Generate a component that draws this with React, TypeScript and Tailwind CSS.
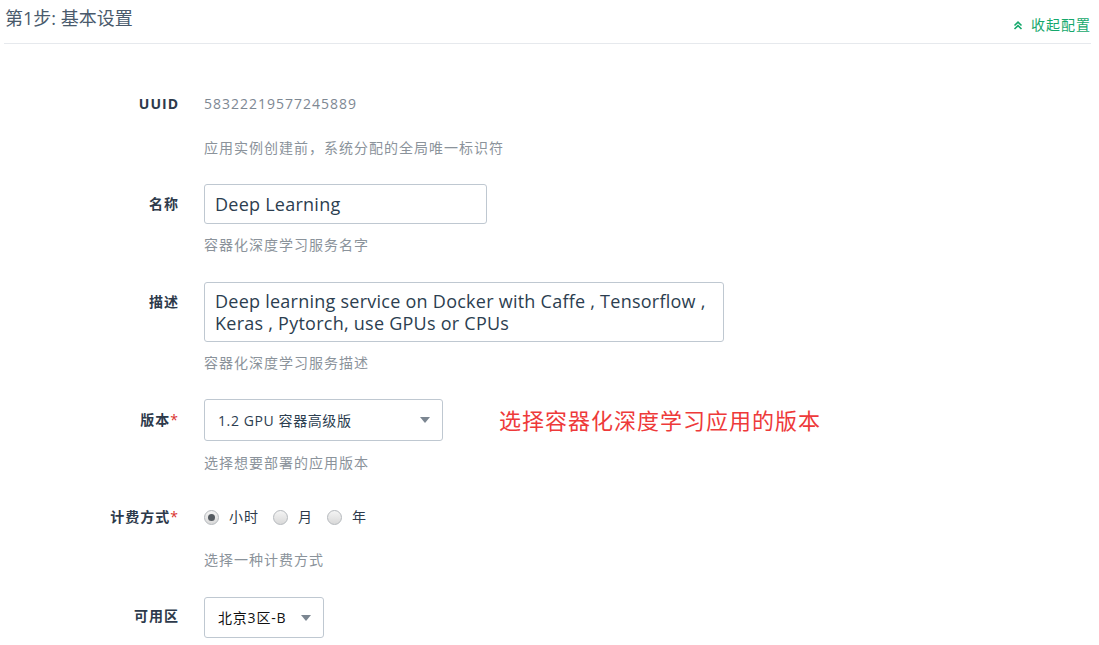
import { useState } from 'react';

const font = { fontFamily: '"Open Sans", "Noto Sans CJK SC", sans-serif' };

const Caret = () => (
    <svg width="10" height="6" viewBox="0 0 10 6" className="shrink-0">
        <path d="M0 0h10L5 6z" fill="#7b8691" />
    </svg>
);

const Help = ({ children, className = '' }: { children: React.ReactNode; className?: string }) => (
    <p className={`text-[14px] leading-5 tracking-[1px] text-[#8b939b] ${className}`}>{children}</p>
);

const Label = ({ text, required, pt }: { text: string; required?: boolean; pt: string }) => (
    <div className={`w-[179px] shrink-0 text-right text-[14px] leading-5 font-bold tracking-[1px] text-[#2d3a4b] ${pt}`}>
        {text}
        {required && <span className="text-[#d9302c] font-normal">*</span>}
    </div>
);

const Radio = ({ checked, label, onClick }: { checked: boolean; label: string; onClick: () => void }) => (
    <button type="button" onClick={onClick} className="flex items-center gap-[10px]">
        <span className="w-[15px] h-[15px] rounded-full border border-[#b5b9bd] bg-gradient-to-b from-[#f4f4f4] to-[#d9d9d9] flex items-center justify-center">
            {checked && <span className="w-[7px] h-[7px] rounded-full bg-[#555b61]" />}
        </span>
        <span className="text-[14px] leading-5 tracking-[1px] text-[#2d3a4b]">{label}</span>
    </button>
);

export default function App() {
    const [billing, setBilling] = useState('hour');

    return (
        <div className="min-h-screen bg-white" style={font}>
            {/* Header */}
            <div className="ml-1 mr-2 h-11 border-b border-[#e6e9ed] flex justify-between">
                <h1 className="pl-[1px] pt-[6px] text-[18px] leading-6 text-[#4a5a6c]">第1步: 基本设置</h1>
                <button className="flex items-center gap-2 h-fit mt-[15px] text-[14px] leading-5 tracking-[1px] text-[#15a86c]">
                    <svg width="10" height="9" viewBox="0 0 10 9" fill="none" stroke="#15a86c" strokeWidth="1.6">
                        <path d="M1.5 4.5L5 1.2l3.5 3.3M1.5 8L5 4.7 8.5 8" />
                    </svg>
                    收起配置
                </button>
            </div>

            <div className="pt-[50px]">
                {/* UUID */}
                <div className="flex gap-[25px]">
                    <Label text="UUID" pt="pt-0" />
                    <div>
                        <p className="text-[14px] leading-5 tracking-[1px] text-[#7e8893]">58322219577245889</p>
                        <Help className="mt-6">应用实例创建前，系统分配的全局唯一标识符</Help>
                    </div>
                </div>

                {/* 名称 */}
                <div className="flex gap-[25px] mt-[26px]">
                    <Label text="名称" pt="pt-[10px]" />
                    <div>
                        <input
                            defaultValue="Deep Learning"
                            className="w-[283px] h-10 rounded-[3px] border border-[#bfc8d1] px-[10px] text-[18px] tracking-[0.25px] text-[#2c3e50] outline-none"
                            style={font}
                        />
                        <Help className="mt-[11px]">容器化深度学习服务名字</Help>
                    </div>
                </div>

                {/* 描述 */}
                <div className="flex gap-[25px] mt-[27px]">
                    <Label text="描述" pt="pt-[10px]" />
                    <div>
                        <div className="w-[520px] h-[60px] rounded-[3px] border border-[#bfc8d1] px-[10px] pt-[7px] text-[18px] leading-[22px] tracking-[0.25px] text-[#2c3e50]">
                            <p>Deep learning service on Docker with Caffe , Tensorflow ,</p>
                            <p>Keras , Pytorch, use GPUs or CPUs</p>
                        </div>
                        <Help className="mt-[11px]">容器化深度学习服务描述</Help>
                    </div>
                </div>

                {/* 版本 */}
                <div className="flex gap-[25px] mt-[26px]">
                    <Label text="版本" required pt="pt-[11px]" />
                    <div>
                        <div className="flex items-center gap-14">
                            <div className="w-[239px] h-[42px] rounded-[3px] border border-[#bfc8d1] pl-[13px] pr-[12px] flex items-center justify-between text-[14px] tracking-[0.6px] text-[#2c3e50]">
                                <span>1.2 GPU 容器高级版</span>
                                <Caret />
                            </div>
                            <span className="text-[22px] tracking-[1px] text-[#ee3a3a]">选择容器化深度学习应用的版本</span>
                        </div>
                        <Help className="mt-[12px]">选择想要部署的应用版本</Help>
                    </div>
                </div>

                {/* 计费方式 */}
                <div className="flex gap-[25px] mt-[34px]">
                    <Label text="计费方式" required pt="pt-0" />
                    <div>
                        <div className="flex items-center gap-[14px]">
                            <Radio checked={billing === 'hour'} label="小时" onClick={() => setBilling('hour')} />
                            <Radio checked={billing === 'month'} label="月" onClick={() => setBilling('month')} />
                            <Radio checked={billing === 'year'} label="年" onClick={() => setBilling('year')} />
                        </div>
                        <Help className="mt-[23px]">选择一种计费方式</Help>
                    </div>
                </div>

                {/* 可用区 */}
                <div className="flex gap-[25px] mt-[27px]">
                    <Label text="可用区" pt="pt-[9px]" />
                    <div className="w-[120px] h-[41px] rounded-[3px] border border-[#bfc8d1] pl-[13px] pr-[12px] flex items-center justify-between text-[14px] tracking-[0.8px] text-[#111]">
                        <span>北京3区-B</span>
                        <Caret />
                    </div>
                </div>
            </div>
        </div>
    );
}
